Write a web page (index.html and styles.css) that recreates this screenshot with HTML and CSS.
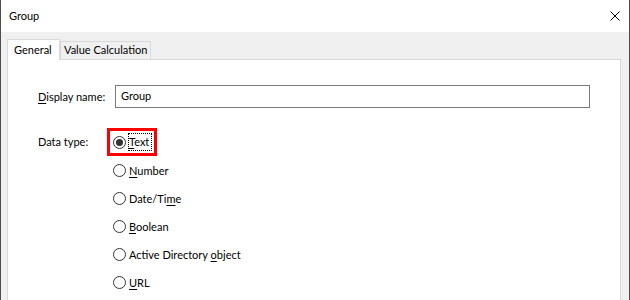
FILE: index.html
```html
<!DOCTYPE html>
<html lang="en">
<head>
    <meta charset="UTF-8">
    <meta name="viewport" content="width=device-width, initial-scale=1.0">
    <title>Group</title>
    <link rel="stylesheet" href="styles.css">
</head>
<body>
    <div class="window">
        <div class="titlebar">
            <span class="title">Group</span>
            <svg class="close" width="10" height="10" viewBox="0 0 10 10">
                <path d="M0.5 0.5 L9.5 9.5 M9.5 0.5 L0.5 9.5" stroke="#000" stroke-width="1" fill="none"/>
            </svg>
        </div>
        <div class="dialog-body">
            <div class="tabs">
                <div class="tab active">General</div>
                <div class="tab">Value Calculation</div>
            </div>
            <div class="panel">
                <div class="name-row">
                    <span class="label"><u>D</u>isplay name:</span>
                    <div class="textbox">Group</div>
                </div>
                <div class="type-row">
                    <span class="label">Data type:</span>
                    <div class="options">
                        <div class="option highlight">
                            <span class="radio checked"></span>
                            <span class="focus"><u>T</u>ext</span>
                        </div>
                        <div class="option">
                            <span class="radio"></span>
                            <span><u>N</u>umber</span>
                        </div>
                        <div class="option">
                            <span class="radio"></span>
                            <span>Date/Ti<u>m</u>e</span>
                        </div>
                        <div class="option">
                            <span class="radio"></span>
                            <span><u>B</u>oolean</span>
                        </div>
                        <div class="option">
                            <span class="radio"></span>
                            <span>Active Directory <u>o</u>bject</span>
                        </div>
                        <div class="option">
                            <span class="radio"></span>
                            <span><u>U</u>RL</span>
                        </div>
                    </div>
                </div>
            </div>
        </div>
    </div>
</body>
</html>
```

FILE: styles.css
```css
body {
    margin: 0;
    font-family: "Segoe UI", Lato, "Noto Sans", sans-serif;
    font-size: 11px;
    color: #000;
    background: #fff;
}
.window {
    width: 630px;
    height: 300px;
    box-sizing: border-box;
    border-left: 1px solid #4d4d4d;
    border-right: 1px solid #4d4d4d;
    display: flex;
    flex-direction: column;
    overflow: hidden;
}
.titlebar {
    height: 31px;
    flex: none;
    background: #fff;
    display: flex;
    align-items: center;
    justify-content: space-between;
    padding: 0 9px 1px 8px;
}
.title {
    line-height: 16px;
}
.close {
    display: block;
}
.dialog-body {
    flex: 1;
    background: #f0f0f0;
    padding: 7px 8px 0 6px;
    display: flex;
    flex-direction: column;
}
.tabs {
    display: flex;
    align-items: flex-end;
    height: 20px;
    position: relative;
    z-index: 1;
    white-space: nowrap;
}
.tab {
    box-sizing: border-box;
    height: 18px;
    line-height: 16px;
    padding: 0 3px 0 3px;
    border: 1px solid #d9d9d9;
    border-bottom: none;
    background: #f0f0f0;
}
.tab.active {
    height: 21px;
    width: 53px;
    margin-bottom: -1px;
    padding: 2px 6px 0 6px;
    background: #fff;
}
.panel {
    flex: 1;
    background: #fff;
    border: 1px solid #d9d9d9;
    border-bottom: none;
    padding: 25px 30px 0 30px;
}
.label {
    flex: none;
    white-space: nowrap;
}
.name-row {
    display: flex;
    align-items: center;
}
.name-row .label {
    width: 77px;
}
.textbox {
    box-sizing: border-box;
    width: 476px;
    height: 23px;
    border: 1px solid #7a7a7a;
    padding: 0 5px;
    line-height: 20px;
}
.type-row {
    display: flex;
    margin-top: 20px;
}
.type-row .label {
    width: 69px;
    line-height: 27px;
}
.options {
    display: flex;
    flex-direction: column;
}
.option {
    box-sizing: border-box;
    height: 28px;
    width: fit-content;
    display: flex;
    align-items: center;
    gap: 3px;
    border: 3px solid transparent;
    padding: 0 3px;
    white-space: nowrap;
}
.option.highlight {
    border-color: #f00;
}
.radio {
    box-sizing: border-box;
    flex: none;
    width: 13px;
    height: 13px;
    border: 1px solid #333;
    border-radius: 50%;
    background: #fff;
    display: flex;
    align-items: center;
    justify-content: center;
}
.radio.checked::after {
    content: "";
    width: 7px;
    height: 7px;
    border-radius: 50%;
    background: #333;
}
.focus {
    outline: 1px dotted #000;
    outline-offset: 0;
    line-height: 16px;
    padding: 0 2px 0 0;
}
u {
    text-decoration-thickness: 1px;
    text-underline-offset: 2px;
}
```
